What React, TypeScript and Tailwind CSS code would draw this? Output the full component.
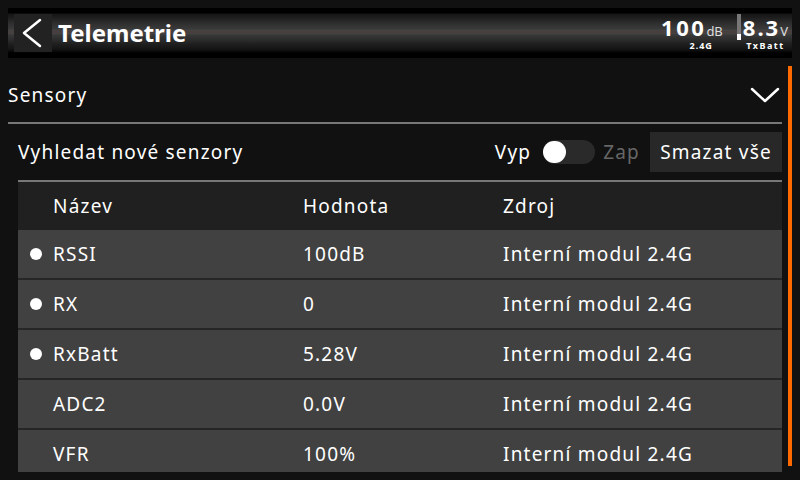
type Sensor = { name: string; value: string; source: string; live: boolean };

const sensors: Sensor[] = [
  { name: 'RSSI', value: '100dB', source: 'Interní modul 2.4G', live: true },
  { name: 'RX', value: '0', source: 'Interní modul 2.4G', live: true },
  { name: 'RxBatt', value: '5.28V', source: 'Interní modul 2.4G', live: true },
  { name: 'ADC2', value: '0.0V', source: 'Interní modul 2.4G', live: false },
  { name: 'VFR', value: '100%', source: 'Interní modul 2.4G', live: false },
];

function Header() {
  return (
    <div className="ml-2 mt-2 flex h-[50px] w-[784px] items-center bg-[linear-gradient(to_bottom,#000_0px,#000_5px,#151515_6px,#1e1e1e_10px,#2e2e2e_15px,#3a3a3a_21px,#474747_23px,#4b3434_24px,#474747_25px,#383838_27px,#2c2c2c_32px,#1f1f1f_36px,#151515_41px,#000_45px,#000_50px)]">
      <button className="ml-[6px] flex h-[38px] w-[38px] items-center justify-center bg-[#222]">
        <svg width="38" height="38" viewBox="0 0 38 38">
          <polyline points="26,6 10,19 26,32" fill="none" stroke="white" strokeWidth="2.5" strokeLinecap="round" strokeLinejoin="round" />
        </svg>
      </button>
      <div className="ml-[6px] text-[24px] font-bold leading-none tracking-normal text-white">Telemetrie</div>

      <div className="ml-auto flex items-start pr-[4px] tracking-normal">
        <div className="flex flex-col items-end">
          <div className="flex h-[22px] items-baseline leading-none">
            <span className="text-[22px] font-bold tracking-[2.5px] text-white">100</span>
            <span className="text-[13px] text-[#ddd]">dB</span>
          </div>
          <span className="mr-[10px] mt-[3px] text-[9px] font-bold leading-none tracking-[1px] text-white">2.4G</span>
        </div>

        <div className="ml-[14px] mt-[-2px] flex h-[26px] w-[4px] flex-col">
          <div className="flex-1 bg-[#777]" />
          <div className="h-[6px] bg-white" />
        </div>

        <div className="ml-[2px] flex flex-col items-center">
          <div className="flex h-[22px] items-baseline leading-none">
            <span className="text-[22px] font-bold tracking-[2px] text-white">8.3</span>
            <span className="text-[13px] text-[#ddd]">V</span>
          </div>
          <span className="mt-[3px] text-[9px] font-bold leading-none tracking-[1.5px] text-white">TxBatt</span>
        </div>
      </div>
    </div>
  );
}

function Toggle() {
  return (
    <div className="relative h-[24px] w-[52px] rounded-full bg-[#2a2a2a]">
      <div className="absolute left-0 top-[1px] h-[22px] w-[23px] rounded-full bg-white" />
    </div>
  );
}

function SensorRow({ sensor }: { sensor: Sensor }) {
  return (
    <div className="flex h-[48px] shrink-0 items-center bg-[#414141] text-white">
      <div className="flex w-[35px] justify-center">
        {sensor.live ? <div className="h-[12px] w-[12px] rounded-full bg-white" /> : null}
      </div>
      <div className="w-[250px]">{sensor.name}</div>
      <div className="w-[200px]">{sensor.value}</div>
      <div>{sensor.source}</div>
    </div>
  );
}

export default function App() {
  return (
    <div
      className="relative h-[480px] w-[800px] overflow-hidden bg-[#111] text-[19px] tracking-[1.2px] text-white"
      style={{ fontFamily: '"Noto Sans", "Open Sans", sans-serif' }}
    >
      <Header />

      <div className="flex">
        <div className="ml-2 mt-2 flex h-[406px] w-[774px] flex-col overflow-hidden">
          <div className="flex h-[56px] shrink-0 items-center justify-between">
            <span className="mt-[2px]">Sensory</span>
            <svg width="30" height="18" viewBox="0 0 30 18" className="mr-[2px] mt-[2px]">
              <polyline points="2,3 15,15 28,3" fill="none" stroke="white" strokeWidth="2.5" strokeLinecap="round" strokeLinejoin="round" />
            </svg>
          </div>
          <div className="h-[2px] shrink-0 bg-[#777]" />

          <div className="ml-[10px] flex flex-col">
            <div className="flex h-[56px] shrink-0 items-center">
              <span>Vyhledat nové senzory</span>
              <div className="ml-auto flex items-center">
                <span className="mr-[12px]">Vyp</span>
                <Toggle />
                <span className="ml-[8px] text-[#666]">Zap</span>
                <button className="ml-[10px] flex h-[40px] w-[132px] items-center justify-center bg-[#282828] text-white">
                  Smazat vše
                </button>
              </div>
            </div>
            <div className="h-[2px] shrink-0 bg-[#777]" />

            <div className="flex h-[48px] shrink-0 items-center bg-[#202020]">
              <div className="w-[35px]" />
              <div className="w-[250px]">Název</div>
              <div className="w-[200px]">Hodnota</div>
              <div>Zdroj</div>
            </div>

            <div className="flex flex-col gap-[2px] bg-[#262626]">
              {sensors.map((s) => (
                <SensorRow key={s.name} sensor={s} />
              ))}
            </div>
          </div>
        </div>

        <div className="ml-[6px] mt-2 h-[400px] w-[4px] bg-[#ff6a00]" />
      </div>
    </div>
  );
}
